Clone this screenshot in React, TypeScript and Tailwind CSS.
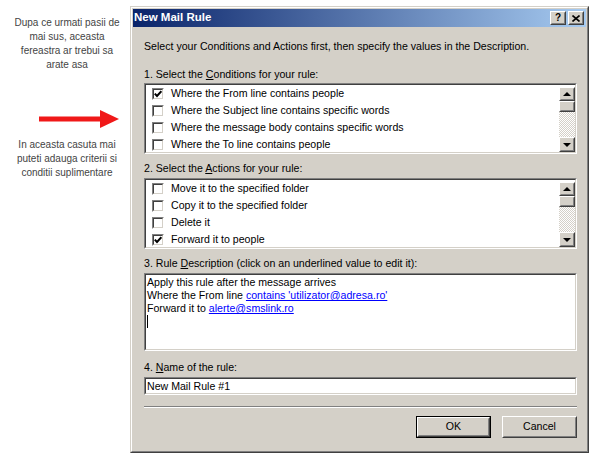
import React from 'react';

const conditions = [
  { label: 'Where the From line contains people', checked: true },
  { label: 'Where the Subject line contains specific words', checked: false },
  { label: 'Where the message body contains specific words', checked: false },
  { label: 'Where the To line contains people', checked: false },
];

const actions = [
  { label: 'Move it to the specified folder', checked: false },
  { label: 'Copy it to the specified folder', checked: false },
  { label: 'Delete it', checked: false },
  { label: 'Forward it to people', checked: true },
];

const Sunken = ({ className = '', children }: { className?: string; children?: React.ReactNode }) => (
  <div className={`border border-t-[#808080] border-l-[#808080] border-b-white border-r-white ${className}`}>
    <div className="h-full border border-t-[#404040] border-l-[#404040] border-b-[#d4d0c8] border-r-[#d4d0c8] bg-white">
      {children}
    </div>
  </div>
);

const Raised = ({ className = '', children }: { className?: string; children?: React.ReactNode }) => (
  <div className={`border border-t-white border-l-white border-b-[#404040] border-r-[#404040] bg-[#d4d0c8] ${className}`}>
    <div className="flex h-full w-full items-center justify-center border border-t-[#d4d0c8] border-l-[#d4d0c8] border-b-[#808080] border-r-[#808080]">
      {children}
    </div>
  </div>
);

const Checkbox = ({ checked }: { checked: boolean }) => (
  <span className="flex h-[12px] w-[12px] shrink-0 border border-t-[#808080] border-l-[#808080] border-b-white border-r-white">
    <span className="flex flex-1 items-center justify-center border border-t-[#404040] border-l-[#404040] border-b-[#d4d0c8] border-r-[#d4d0c8] bg-white">
      {checked && (
        <svg width="8" height="8" viewBox="0 0 8 8">
          <path d="M0.8 3.6 L3 6 L7.4 1.2" fill="none" stroke="black" strokeWidth="2" />
        </svg>
      )}
    </span>
  </span>
);

const Scrollbar = () => (
  <div className="flex h-full w-[16px] shrink-0 flex-col pt-[2px]">
    <Raised className="h-[14px]">
      <span className="h-0 w-0 border-x-[4px] border-x-transparent border-b-[4px] border-b-black" />
    </Raised>
    <Raised className="h-[11px]" />
    <div className="flex-1 bg-[conic-gradient(#ffffff_25%,#d4d0c8_0_50%,#ffffff_0_75%,#d4d0c8_0)] bg-[length:2px_2px]" />
    <Raised className="h-[15px]">
      <span className="h-0 w-0 border-x-[4px] border-x-transparent border-t-[4px] border-t-black" />
    </Raised>
  </div>
);

const ListBox = ({ items }: { items: { label: string; checked: boolean }[] }) => (
  <Sunken className="h-[71px]">
    <div className="flex h-full">
      <div className="flex-1 overflow-hidden">
        {items.map((item) => (
          <div key={item.label} className="flex h-[17px] items-center gap-[7px] pl-[6px]">
            <Checkbox checked={item.checked} />
            <span className="whitespace-nowrap leading-[13px]">{item.label}</span>
          </div>
        ))}
      </div>
      <Scrollbar />
    </div>
  </Sunken>
);

const Label = ({ className = '', children }: { className?: string; children: React.ReactNode }) => (
  <div className={`h-[13px] whitespace-nowrap leading-[13px] ${className}`}>{children}</div>
);

export default function App() {
  return (
    <div className="flex h-[465px] w-[599px] bg-white font-['Liberation_Sans',Arial,sans-serif] text-[10.6px] text-black">
      {/* Left notes */}
      <div className="w-[130px] shrink-0 pl-[4px] pt-[16px] text-center text-[10px] leading-[14px] text-[#444444]">
        <p>
          Dupa ce urmati pasii de
          <br />
          mai sus, aceasta
          <br />
          fereastra ar trebui sa
          <br />
          arate asa
        </p>
        <div className="mt-[38px] pl-[35px]">
          <svg width="80" height="18" viewBox="0 0 80 18">
            <rect x="0" y="6.5" width="62" height="5" fill="#f01818" />
            <polygon points="61,0 80,9 61,18" fill="#f01818" />
          </svg>
        </div>
        <p className="mt-[10px]">
          In aceasta casuta mai
          <br />
          puteti adauga criterii si
          <br />
          conditii suplimentare
        </p>
      </div>

      {/* Dialog */}
      <div className="mt-[6px] h-[447px] w-[459px] border border-t-[#d4d0c8] border-l-[#d4d0c8] border-b-[#404040] border-r-[#404040]">
        <div className="flex h-full flex-col border border-t-white border-l-white border-b-[#808080] border-r-[#808080] bg-[#d4d0c8] p-px">
          <div className="flex h-[18px] items-center justify-between bg-[linear-gradient(to_right,#0a246a,#a6caf0)] pl-[1px] pr-[2px]">
            <span className="text-[11.5px] font-bold text-white">New Mail Rule</span>
            <div className="flex gap-[2px]">
              <Raised className="h-[14px] w-[16px]">
                <span className="text-[10px] font-bold leading-none">?</span>
              </Raised>
              <Raised className="h-[14px] w-[16px]">
                <svg width="8" height="7" viewBox="0 0 8 7">
                  <path d="M0.5 0.5 L7.5 6.5 M7.5 0.5 L0.5 6.5" stroke="black" strokeWidth="1.6" />
                </svg>
              </Raised>
            </div>
          </div>

          <div className="flex flex-1 flex-col pl-[11px] pr-[9px] pt-[13px]">
            <Label>Select your Conditions and Actions first, then specify the values in the Description.</Label>
            <Label className="mt-[15px]">
              1. Select the <u>C</u>onditions for your rule:
            </Label>
            <div className="mt-[2px]">
              <ListBox items={conditions} />
            </div>
            <Label className="mt-[8px]">
              2. Select the <u>A</u>ctions for your rule:
            </Label>
            <div className="mt-[3px]">
              <ListBox items={actions} />
            </div>
            <Label className="mt-[8px]">
              3. Rule <u>D</u>escription (click on an underlined value to edit it):
            </Label>
            <Sunken className="mt-[3px] h-[78px]">
              <div className="pl-[1px] pt-[1px] leading-[13px]">
                <div>Apply this rule after the message arrives</div>
                <div>
                  Where the From line <span className="text-[#0000ff] underline">contains 'utilizator@adresa.ro'</span>
                </div>
                <div>
                  Forward it to <span className="text-[#0000ff] underline">alerte@smslink.ro</span>
                </div>
                <div className="h-[13px] w-px bg-black" />
              </div>
            </Sunken>
            <Label className="mt-[10px]">
              4. <u>N</u>ame of the rule:
            </Label>
            <Sunken className="mt-[3px] h-[18px]">
              <div className="pl-[1px] leading-[14px]">New Mail Rule #1</div>
            </Sunken>
            <div className="mt-[11px] border-t border-b border-t-[#808080] border-b-white" />
            <div className="mt-[8px] flex justify-end gap-[11px]">
              <div className="h-[22px] w-[75px] border border-black">
                <Raised className="h-full w-full">OK</Raised>
              </div>
              <Raised className="h-[22px] w-[75px]">Cancel</Raised>
            </div>
          </div>
        </div>
      </div>
    </div>
  );
}
